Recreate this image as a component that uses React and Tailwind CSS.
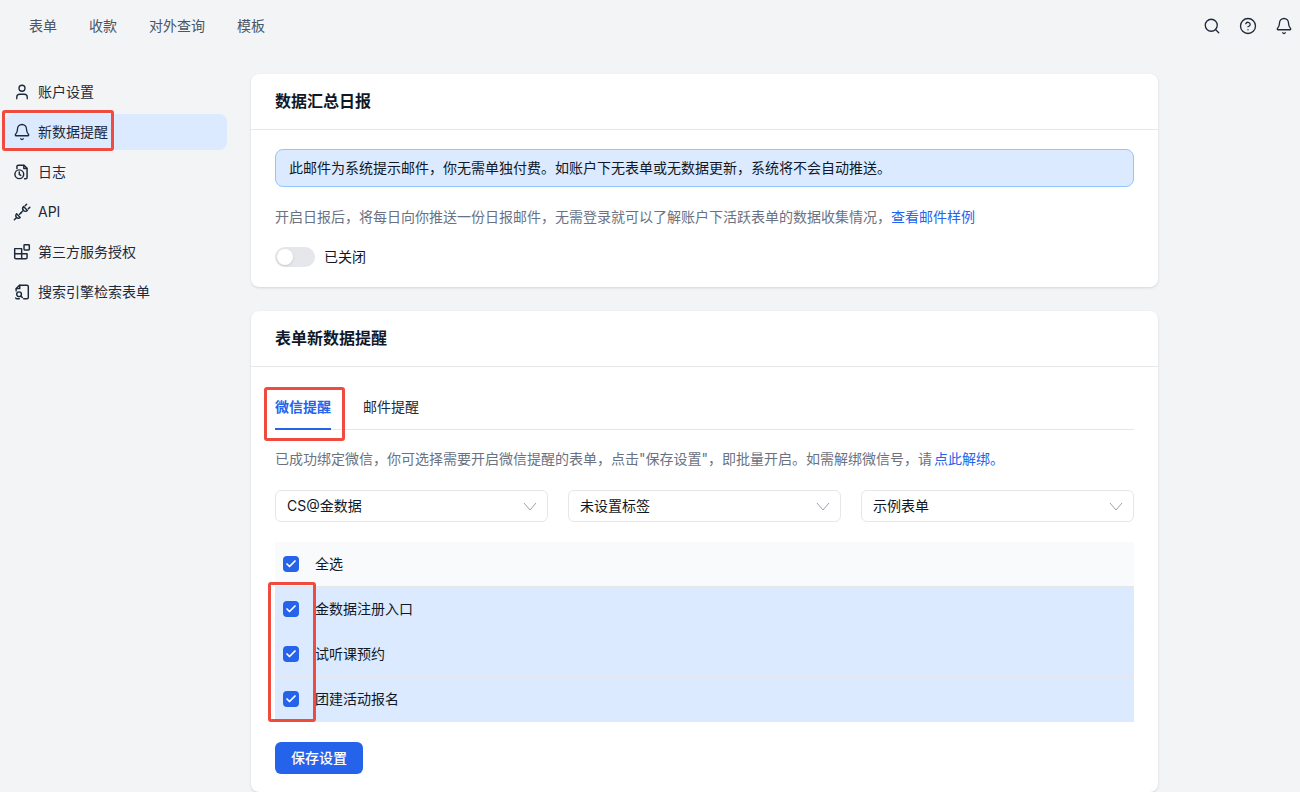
import React from "react";
import { Search, CircleHelp, Bell, User, Check } from "lucide-react";

const FileClock = () => (
  <svg viewBox="0 0 16 16" className="w-[18px] h-[18px]" fill="none" stroke="currentColor" strokeWidth="1.3" strokeLinecap="round" strokeLinejoin="round">
    <path d="M3.5 5V3.2c0-.7.5-1.2 1.2-1.2h5.1l2.7 2.7v8.1c0 .7-.5 1.2-1.2 1.2h-1" />
    <path d="M9.6 2.2v2.7h2.7" />
    <circle cx="5.6" cy="10" r="3.9" />
    <path d="M5.6 8v2.2l1.3.8" />
  </svg>
);

const Plug = () => (
  <svg viewBox="0 0 16 16" className="w-[18px] h-[18px]" fill="none" stroke="currentColor" strokeWidth="1.3" strokeLinecap="round" strokeLinejoin="round">
    <path d="M1.2 14.8l2-2" />
    <path d="M3.2 9.6l3.2 3.2c-1 1-2.400 1-3.200.1-.9-.8-1-2.300 0-3.300z" />
    <path d="M7 8.800l-1.200 1.200" />
    <path d="M9.400 3.200l3.400 3.400c-1 1-2.500 1-3.400.1-.9-.9-1-2.500 0-3.500z" />
    <path d="M7 8.800l1.600-1.600" />
    <path d="M10.800 2.400l1.300-1.300" />
    <path d="M13.600 5.200l1.300-1.300" />
  </svg>
);

const Apps = () => (
  <svg viewBox="0 0 16 16" className="w-[18px] h-[18px]" fill="none" stroke="currentColor" strokeWidth="1.3" strokeLinejoin="round">
    <path d="M1.500 5h6.200v9H2.600c-.6 0-1.100-.5-1.100-1.100V5z" />
    <path d="M1.500 9.500h11v3.400c0 .6-.5 1.100-1.100 1.100H7.700" />
    <rect x="9.800" y="1.500" width="4.700" height="4.700" rx="0.6" />
  </svg>
);

const FileSearch = () => (
  <svg viewBox="0 0 16 16" className="w-[18px] h-[18px]" fill="none" stroke="currentColor" strokeWidth="1.3" strokeLinecap="round" strokeLinejoin="round">
    <path d="M2.800 7V5l3-3h6.600c.7 0 1.200.5 1.200 1.200v9.600c0 .7-.5 1.200-1.200 1.200H9.500" />
    <path d="M6 2v3H3" />
    <circle cx="5.400" cy="10" r="2.100" />
    <path d="M7 11.600l1.300 1.300" />
    <path d="M2.400 13.400c.3.400.7.600 1.200.6h2" />
  </svg>
);

const iconClass = "w-[18px] h-[18px]";

const sideItems = [
  { label: "账户设置", icon: <User className={iconClass} strokeWidth={1.75} /> },
  { label: "新数据提醒", icon: <Bell className={iconClass} strokeWidth={1.75} />, active: true },
  { label: "日志", icon: <FileClock /> },
  { label: "API", icon: <Plug /> },
  { label: "第三方服务授权", icon: <Apps /> },
  { label: "搜索引擎检索表单", icon: <FileSearch /> },
];

const Checkbox = () => (
  <span className="w-4 h-4 rounded bg-[#2563eb] flex items-center justify-center text-white shrink-0">
    <Check className="w-3 h-3" strokeWidth={3.5} />
  </span>
);

const Select = ({ value }) => (
  <div className="flex-1 h-8 pl-[11px] pr-[10px] flex items-center justify-between bg-white border border-gray-200 rounded-md text-sm text-gray-900">
    <span>{value}</span>
    <svg viewBox="0 0 14 9" className="w-[14px] h-[9px] text-gray-400" fill="none" stroke="currentColor" strokeWidth="1">
      <path d="M1 1l6 7 6-7" />
    </svg>
  </div>
);

const Mark = ({ className }) => (
  <div className={"absolute border-[3px] border-[#ef4b3f] rounded-[3px] pointer-events-none " + className} />
);

export default function App() {
  return (
    <div className="relative h-[792px] overflow-hidden bg-[#f3f4f6] text-sm text-gray-900 font-['Inter','Noto_Sans_CJK_SC',sans-serif]">
      {/* top bar */}
      <header className="h-[52px] pl-[29px] pr-[7px] flex items-center justify-between">
        <nav className="flex gap-8 text-gray-600">
          <span>表单</span>
          <span>收款</span>
          <span>对外查询</span>
          <span>模板</span>
        </nav>
        <div className="flex items-center gap-[18px] text-gray-800">
          <Search className={iconClass} strokeWidth={1.75} />
          <CircleHelp className={iconClass} strokeWidth={1.75} />
          <Bell className={iconClass} strokeWidth={1.75} />
        </div>
      </header>

      <div className="flex">
        {/* sidebar */}
        <aside className="w-[222px] ml-[5px] mt-[22px] flex flex-col gap-1 shrink-0">
          {sideItems.map((item) => (
            <div
              key={item.label}
              className={"h-9 pl-2 flex items-center gap-[7px] rounded-lg text-gray-800 " + (item.active ? "bg-[#dbeafe]" : "")}
            >
              {item.icon}
              <span>{item.label}</span>
            </div>
          ))}
        </aside>

        <main className="w-[907px] ml-6 mt-[22px] flex flex-col gap-6">
          {/* daily report card */}
          <section className="bg-white rounded-lg shadow">
            <h2 className="h-14 px-6 pb-0.5 flex items-center border-b border-gray-200 text-base font-semibold">数据汇总日报</h2>
            <div className="px-6 pt-[19px] pb-5">
              <div className="h-[38px] px-[13px] flex items-center bg-[#dbeafe] border border-[#93c5fd] rounded-lg">
                此邮件为系统提示邮件，你无需单独付费。如账户下无表单或无数据更新，系统将不会自动推送。
              </div>
              <p className="mt-5 text-gray-500 leading-5">
                开启日报后，将每日向你推送一份日报邮件，无需登录就可以了解账户下活跃表单的数据收集情况，
                <span className="text-[#2563eb]">查看邮件样例</span>
              </p>
              <div className="mt-5 flex items-center gap-[9px]">
                <span className="w-10 h-5 p-0.5 rounded-full bg-gray-200 flex items-center">
                  <span className="w-4 h-4 rounded-full bg-white shadow" />
                </span>
                <span>已关闭</span>
              </div>
            </div>
          </section>

          {/* new data reminder card */}
          <section className="bg-white rounded-lg shadow pb-[18px]">
            <h2 className="h-14 px-6 pb-0.5 flex items-center border-b border-gray-200 text-base font-semibold">表单新数据提醒</h2>
            <div className="px-6 pt-[19px]">
              <div className="flex gap-8 border-b border-gray-200 h-[44px]">
                <span className="h-[44px] pt-[11px] border-b-2 border-[#2563eb] text-[#2563eb] font-semibold">微信提醒</span>
                <span className="pt-[11px] text-gray-800">邮件提醒</span>
              </div>
              <p className="mt-[19px] text-gray-500 leading-5">
                已成功绑定微信，你可选择需要开启微信提醒的表单，点击"保存设置"，即批量开启。如需解绑微信号，请<span className="ml-0.5 text-[#2563eb]">点此解绑。</span>
              </p>
              <div className="mt-[21px] flex gap-5">
                <Select value="CS@金数据" />
                <Select value="未设置标签" />
                <Select value="示例表单" />
              </div>
              <div className="mt-5">
                <div className="h-[45px] pl-2 flex items-center gap-4 bg-gray-50 border-b border-gray-200">
                  <Checkbox />
                  <span>全选</span>
                </div>
                {["金数据注册入口", "试听课预约", "团建活动报名"].map((name, i) => (
                  <div key={name} className={"h-[45px] pl-2 flex items-center gap-4 bg-[#dbeafe] border-b " + (i < 2 ? "border-gray-200" : "border-[#dbeafe]")}>
                    <Checkbox />
                    <span>{name}</span>
                  </div>
                ))}
              </div>
              <button className="mt-5 w-[88px] h-8 rounded-md bg-[#2563eb] text-white font-medium">保存设置</button>
            </div>
          </section>
        </main>
      </div>

      {/* red annotation boxes */}
      <Mark className="left-[2px] top-[110px] w-[112px] h-[41px]" />
      <Mark className="left-[264px] top-[387px] w-[81px] h-[54px]" />
      <Mark className="left-[268px] top-[582px] w-[48px] h-[140px]" />
    </div>
  );
}
